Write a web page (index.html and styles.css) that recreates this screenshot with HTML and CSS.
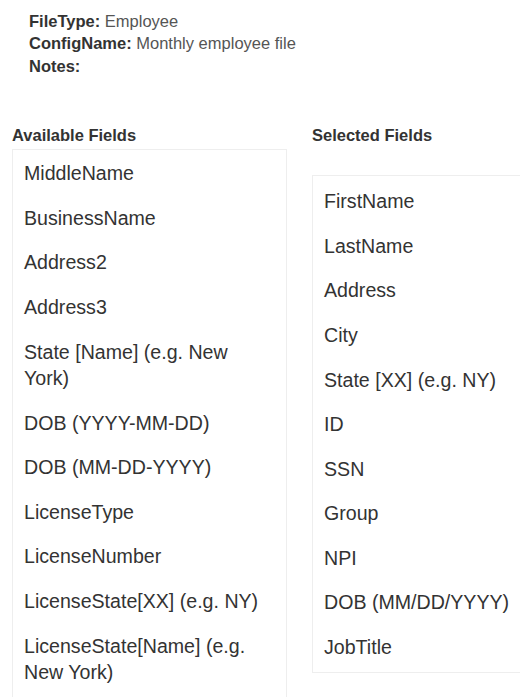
FILE: index.html
```html
<!DOCTYPE html>
<html lang="en">
<head>
<meta charset="utf-8">
<title>Config</title>
<link rel="stylesheet" href="styles.css">
</head>
<body>
<div class="info">
  <div class="info-line"><span class="label">FileType:</span> <span class="value">Employee</span></div>
  <div class="info-line"><span class="label">ConfigName:</span> <span class="value">Monthly employee file</span></div>
  <div class="info-line"><span class="label">Notes:</span></div>
</div>
<div class="columns">
  <div class="column">
    <div class="heading">Available Fields</div>
    <ul class="list">
      <li class="item">MiddleName</li>
      <li class="item">BusinessName</li>
      <li class="item">Address2</li>
      <li class="item">Address3</li>
      <li class="item">State [Name] (e.g. New York)</li>
      <li class="item">DOB (YYYY-MM-DD)</li>
      <li class="item">DOB (MM-DD-YYYY)</li>
      <li class="item">LicenseType</li>
      <li class="item">LicenseNumber</li>
      <li class="item">LicenseState[XX] (e.g. NY)</li>
      <li class="item">LicenseState[Name] (e.g. New York)</li>
    </ul>
  </div>
  <div class="column column-selected">
    <div class="heading">Selected Fields</div>
    <ul class="list list-selected">
      <li class="item">FirstName</li>
      <li class="item">LastName</li>
      <li class="item">Address</li>
      <li class="item">City</li>
      <li class="item">State [XX] (e.g. NY)</li>
      <li class="item">ID</li>
      <li class="item">SSN</li>
      <li class="item">Group</li>
      <li class="item">NPI</li>
      <li class="item">DOB (MM/DD/YYYY)</li>
      <li class="item">JobTitle</li>
    </ul>
  </div>
</div>
</body>
</html>
```
FILE: styles.css
```css
html, body {
  margin: 0;
  padding: 0;
  overflow: hidden;
  background: #ffffff;
}
body {
  font-family: "Liberation Sans", Arial, sans-serif;
  color: #333333;
  width: 520px;
  height: 697px;
}
.info {
  padding: 10px 0 0 29px;
  font-size: 16.5px;
  line-height: 22.4px;
}
.label {
  font-weight: bold;
  color: #333333;
}
.value {
  color: #555555;
}
.columns {
  display: flex;
  gap: 25px;
  margin-top: 47px;
  padding-left: 12px;
}
.column {
  flex: 0 0 275px;
  width: 275px;
}
.column-selected {
  flex: 1 1 auto;
  width: auto;
  min-width: 0;
}
.heading {
  font-weight: bold;
  font-size: 16.5px;
  line-height: 22.4px;
  color: #333333;
}
.list {
  list-style: none;
  margin: 2.5px 0 0 0;
  padding: 1px 0 2px 0;
  border: 1px solid #eeeeee;
}
.list-selected {
  margin-top: 28.5px;
  padding-top: 3px;
  border-right: none;
}
.item {
  font-size: 19.6px;
  line-height: 26.6px;
  padding: 9px 11px;
  color: #333333;
}
.list-selected .item {
  white-space: nowrap;
}
```
